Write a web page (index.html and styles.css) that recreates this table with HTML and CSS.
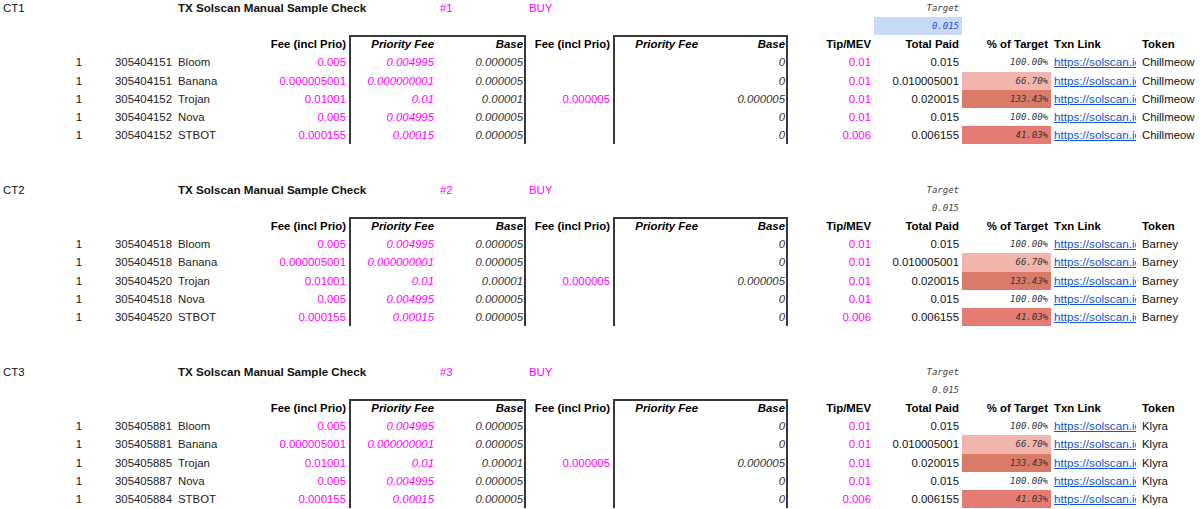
FILE: index.html
```html
<!DOCTYPE html>
<html>
<head>
<meta charset="utf-8">
<link rel="stylesheet" href="styles.css">
</head>
<body>
<div class="sheet">

<section class="block">
  <div class="row"><div class="c1">CT1</div><div class="c4 ttl">TX Solscan Manual Sample Check</div><div class="c7 mg">#1</div><div class="c8 mg">BUY</div><div class="c12 r mono">Target</div></div>
  <div class="row"><div class="c12 r mono tgt hl">0.015</div></div>
  <div class="row hdr"><div class="c5 r">Fee (incl Prio)</div><div class="c6 r bl bt it">Priority Fee</div><div class="c7 r br bt it">Base</div><div class="c8 r">Fee (incl Prio)</div><div class="c9 r bl bt it">Priority Fee</div><div class="c10 r br bt it">Base</div><div class="c11 r">Tip/MEV</div><div class="c12 r">Total Paid</div><div class="c13 r">% of Target</div><div class="c14">Txn Link</div><div class="c15">Token</div></div>
  <div class="row"><div class="c2 r">1</div><div class="c3 r id">305404151</div><div class="c4 nm">Bloom</div><div class="c5 r mg">0.005</div><div class="c6 r mg it bl">0.004995</div><div class="c7 r it gy br">0.000005</div><div class="c9 bl"></div><div class="c10 r it gy br">0</div><div class="c11 r mg">0.01</div><div class="c12 r">0.015</div><div class="c13 r pc">100.00%</div><div class="c14 lk"><a href="#">https://solscan.io</a></div><div class="c15">Chillmeow</div></div>
  <div class="row"><div class="c2 r">1</div><div class="c3 r id">305404151</div><div class="c4 nm">Banana</div><div class="c5 r mg">0.000005001</div><div class="c6 r mg it bl">0.000000001</div><div class="c7 r it gy br">0.000005</div><div class="c9 bl"></div><div class="c10 r it gy br">0</div><div class="c11 r mg">0.01</div><div class="c12 r">0.010005001</div><div class="c13 r pc lo">66.70%</div><div class="c14 lk"><a href="#">https://solscan.io</a></div><div class="c15">Chillmeow</div></div>
  <div class="row"><div class="c2 r">1</div><div class="c3 r id">305404152</div><div class="c4 nm">Trojan</div><div class="c5 r mg">0.01001</div><div class="c6 r mg it bl">0.01</div><div class="c7 r it gy br">0.00001</div><div class="c8 r mg">0.000005</div><div class="c9 bl"></div><div class="c10 r it gy br">0.000005</div><div class="c11 r mg">0.01</div><div class="c12 r">0.020015</div><div class="c13 r pc hi">133.43%</div><div class="c14 lk"><a href="#">https://solscan.io</a></div><div class="c15">Chillmeow</div></div>
  <div class="row"><div class="c2 r">1</div><div class="c3 r id">305404152</div><div class="c4 nm">Nova</div><div class="c5 r mg">0.005</div><div class="c6 r mg it bl">0.004995</div><div class="c7 r it gy br">0.000005</div><div class="c9 bl"></div><div class="c10 r it gy br">0</div><div class="c11 r mg">0.01</div><div class="c12 r">0.015</div><div class="c13 r pc">100.00%</div><div class="c14 lk"><a href="#">https://solscan.io</a></div><div class="c15">Chillmeow</div></div>
  <div class="row"><div class="c2 r">1</div><div class="c3 r id">305404152</div><div class="c4 nm">STBOT</div><div class="c5 r mg">0.000155</div><div class="c6 r mg it bl">0.00015</div><div class="c7 r it gy br">0.000005</div><div class="c9 bl"></div><div class="c10 r it gy br">0</div><div class="c11 r mg">0.006</div><div class="c12 r">0.006155</div><div class="c13 r pc md">41.03%</div><div class="c14 lk"><a href="#">https://solscan.io</a></div><div class="c15">Chillmeow</div></div>
  <div class="row"></div>
  <div class="row"></div>
</section>

<section class="block">
  <div class="row"><div class="c1">CT2</div><div class="c4 ttl">TX Solscan Manual Sample Check</div><div class="c7 mg">#2</div><div class="c8 mg">BUY</div><div class="c12 r mono">Target</div></div>
  <div class="row"><div class="c12 r mono tgt">0.015</div></div>
  <div class="row hdr"><div class="c5 r">Fee (incl Prio)</div><div class="c6 r bl bt it">Priority Fee</div><div class="c7 r br bt it">Base</div><div class="c8 r">Fee (incl Prio)</div><div class="c9 r bl bt it">Priority Fee</div><div class="c10 r br bt it">Base</div><div class="c11 r">Tip/MEV</div><div class="c12 r">Total Paid</div><div class="c13 r">% of Target</div><div class="c14">Txn Link</div><div class="c15">Token</div></div>
  <div class="row"><div class="c2 r">1</div><div class="c3 r id">305404518</div><div class="c4 nm">Bloom</div><div class="c5 r mg">0.005</div><div class="c6 r mg it bl">0.004995</div><div class="c7 r it gy br">0.000005</div><div class="c9 bl"></div><div class="c10 r it gy br">0</div><div class="c11 r mg">0.01</div><div class="c12 r">0.015</div><div class="c13 r pc">100.00%</div><div class="c14 lk"><a href="#">https://solscan.io</a></div><div class="c15">Barney</div></div>
  <div class="row"><div class="c2 r">1</div><div class="c3 r id">305404518</div><div class="c4 nm">Banana</div><div class="c5 r mg">0.000005001</div><div class="c6 r mg it bl">0.000000001</div><div class="c7 r it gy br">0.000005</div><div class="c9 bl"></div><div class="c10 r it gy br">0</div><div class="c11 r mg">0.01</div><div class="c12 r">0.010005001</div><div class="c13 r pc lo">66.70%</div><div class="c14 lk"><a href="#">https://solscan.io</a></div><div class="c15">Barney</div></div>
  <div class="row"><div class="c2 r">1</div><div class="c3 r id">305404520</div><div class="c4 nm">Trojan</div><div class="c5 r mg">0.01001</div><div class="c6 r mg it bl">0.01</div><div class="c7 r it gy br">0.00001</div><div class="c8 r mg">0.000005</div><div class="c9 bl"></div><div class="c10 r it gy br">0.000005</div><div class="c11 r mg">0.01</div><div class="c12 r">0.020015</div><div class="c13 r pc hi">133.43%</div><div class="c14 lk"><a href="#">https://solscan.io</a></div><div class="c15">Barney</div></div>
  <div class="row"><div class="c2 r">1</div><div class="c3 r id">305404518</div><div class="c4 nm">Nova</div><div class="c5 r mg">0.005</div><div class="c6 r mg it bl">0.004995</div><div class="c7 r it gy br">0.000005</div><div class="c9 bl"></div><div class="c10 r it gy br">0</div><div class="c11 r mg">0.01</div><div class="c12 r">0.015</div><div class="c13 r pc">100.00%</div><div class="c14 lk"><a href="#">https://solscan.io</a></div><div class="c15">Barney</div></div>
  <div class="row"><div class="c2 r">1</div><div class="c3 r id">305404520</div><div class="c4 nm">STBOT</div><div class="c5 r mg">0.000155</div><div class="c6 r mg it bl">0.00015</div><div class="c7 r it gy br">0.000005</div><div class="c9 bl"></div><div class="c10 r it gy br">0</div><div class="c11 r mg">0.006</div><div class="c12 r">0.006155</div><div class="c13 r pc md">41.03%</div><div class="c14 lk"><a href="#">https://solscan.io</a></div><div class="c15">Barney</div></div>
  <div class="row"></div>
  <div class="row"></div>
</section>

<section class="block">
  <div class="row"><div class="c1">CT3</div><div class="c4 ttl">TX Solscan Manual Sample Check</div><div class="c7 mg">#3</div><div class="c8 mg">BUY</div><div class="c12 r mono">Target</div></div>
  <div class="row"><div class="c12 r mono tgt">0.015</div></div>
  <div class="row hdr"><div class="c5 r">Fee (incl Prio)</div><div class="c6 r bl bt it">Priority Fee</div><div class="c7 r br bt it">Base</div><div class="c8 r">Fee (incl Prio)</div><div class="c9 r bl bt it">Priority Fee</div><div class="c10 r br bt it">Base</div><div class="c11 r">Tip/MEV</div><div class="c12 r">Total Paid</div><div class="c13 r">% of Target</div><div class="c14">Txn Link</div><div class="c15">Token</div></div>
  <div class="row"><div class="c2 r">1</div><div class="c3 r id">305405881</div><div class="c4 nm">Bloom</div><div class="c5 r mg">0.005</div><div class="c6 r mg it bl">0.004995</div><div class="c7 r it gy br">0.000005</div><div class="c9 bl"></div><div class="c10 r it gy br">0</div><div class="c11 r mg">0.01</div><div class="c12 r">0.015</div><div class="c13 r pc">100.00%</div><div class="c14 lk"><a href="#">https://solscan.io</a></div><div class="c15">Klyra</div></div>
  <div class="row"><div class="c2 r">1</div><div class="c3 r id">305405881</div><div class="c4 nm">Banana</div><div class="c5 r mg">0.000005001</div><div class="c6 r mg it bl">0.000000001</div><div class="c7 r it gy br">0.000005</div><div class="c9 bl"></div><div class="c10 r it gy br">0</div><div class="c11 r mg">0.01</div><div class="c12 r">0.010005001</div><div class="c13 r pc lo">66.70%</div><div class="c14 lk"><a href="#">https://solscan.io</a></div><div class="c15">Klyra</div></div>
  <div class="row"><div class="c2 r">1</div><div class="c3 r id">305405885</div><div class="c4 nm">Trojan</div><div class="c5 r mg">0.01001</div><div class="c6 r mg it bl">0.01</div><div class="c7 r it gy br">0.00001</div><div class="c8 r mg">0.000005</div><div class="c9 bl"></div><div class="c10 r it gy br">0.000005</div><div class="c11 r mg">0.01</div><div class="c12 r">0.020015</div><div class="c13 r pc hi">133.43%</div><div class="c14 lk"><a href="#">https://solscan.io</a></div><div class="c15">Klyra</div></div>
  <div class="row"><div class="c2 r">1</div><div class="c3 r id">305405887</div><div class="c4 nm">Nova</div><div class="c5 r mg">0.005</div><div class="c6 r mg it bl">0.004995</div><div class="c7 r it gy br">0.000005</div><div class="c9 bl"></div><div class="c10 r it gy br">0</div><div class="c11 r mg">0.01</div><div class="c12 r">0.015</div><div class="c13 r pc">100.00%</div><div class="c14 lk"><a href="#">https://solscan.io</a></div><div class="c15">Klyra</div></div>
  <div class="row"><div class="c2 r">1</div><div class="c3 r id">305405884</div><div class="c4 nm">STBOT</div><div class="c5 r mg">0.000155</div><div class="c6 r mg it bl">0.00015</div><div class="c7 r it gy br">0.000005</div><div class="c9 bl"></div><div class="c10 r it gy br">0</div><div class="c11 r mg">0.006</div><div class="c12 r">0.006155</div><div class="c13 r pc md">41.03%</div><div class="c14 lk"><a href="#">https://solscan.io</a></div><div class="c15">Klyra</div></div>
</section>

</div>
</body>
</html>
```

FILE: styles.css
```css
* {
  box-sizing: border-box;
  margin: 0;
  padding: 0;
}

html, body {
  background: #ffffff;
}

body {
  margin: 0;
  font-family: "Liberation Sans", Arial, sans-serif;
  font-size: 11.4px;
  color: #111111;
  overflow: hidden;
}

.sheet {
  margin-top: -1.2px;
}

.row {
  display: grid;
  grid-template-columns: 50px 35px 90px 87px 87px 88px 89px 87px 88px 87px 86px 88px 89px 88px 61px;
  height: 18.2px;
  line-height: 18.2px;
}

.row > div {
  padding: 0 3px;
  white-space: nowrap;
  min-width: 0;
  grid-row: 1;
}

.c1 { grid-column: 1; }
.c2 { grid-column: 2; }
.c3 { grid-column: 3; }
.c4 { grid-column: 4; }
.c5 { grid-column: 5; }
.c6 { grid-column: 6; }
.c7 { grid-column: 7; }
.c8 { grid-column: 8; }
.c9 { grid-column: 9; }
.c10 { grid-column: 10; }
.c11 { grid-column: 11; }
.c12 { grid-column: 12; }
.c13 { grid-column: 13; }
.c14 { grid-column: 14; }
.c15 { grid-column: 15; }

.r { text-align: right; }

.ttl {
  font-weight: bold;
  font-size: 11.6px;
  overflow: visible;
}

.hdr > div {
  font-weight: bold;
  color: #000000;
}

.it { font-style: italic; }

.mg { color: #ff00ff; }

.gy { color: #333333; }

.id, .nm {
  color: #222222;
}

.mono {
  font-family: "DejaVu Sans Mono", "Liberation Mono", monospace;
  font-style: italic;
  font-size: 9px;
  color: #444444;
}

.tgt.hl {
  background: #c9daf8;
  color: #3446d8;
}

.pc {
  font-family: "DejaVu Sans Mono", "Liberation Mono", monospace;
  font-style: italic;
  font-size: 9px;
  color: #333333;
}

.pc.lo { background: #f2b5ad; }
.pc.hi { background: #da7a69; }
.pc.md { background: #e47c73; }

.bl { border-left: 2px solid #383838; }
.br { border-right: 2px solid #383838; padding-right: 1px !important; }
.bt { border-top: 2px solid #383838; line-height: 14.2px; }

.lk {
  overflow: hidden;
}

.lk a {
  display: block;
  overflow: hidden;
  white-space: nowrap;
  color: #1155cc;
  text-decoration: underline;
  font-size: 11.7px;
}
```
